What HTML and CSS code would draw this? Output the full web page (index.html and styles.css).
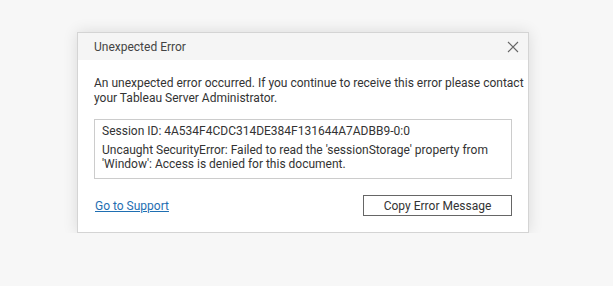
FILE: index.html
```html
<!DOCTYPE html>
<html lang="en">
<head>
    <meta charset="UTF-8">
    <title>Unexpected Error</title>
    <link rel="stylesheet" href="styles.css">
</head>
<body>

<div class="dialog">
    <div class="dialog-header">
        <span class="dialog-title">Unexpected Error</span>
        <button class="close-button" aria-label="Close">
            <svg width="12" height="12" viewBox="0 0 12 12">
                <path d="M1 1 L11 11 M11 1 L1 11" stroke="#666" stroke-width="1.1" fill="none"/>
            </svg>
        </button>
    </div>
    <div class="dialog-body">
        <p class="message">An unexpected error occurred. If you continue to receive this error please contact your Tableau Server Administrator.</p>
        <div class="error-box">
            <p class="session">Session ID: 4A534F4CDC314DE384F131644A7ADBB9-0:0</p>
            <p class="error-text">Uncaught SecurityError: Failed to read the 'sessionStorage' property from 'Window': Access is denied for this document.</p>
        </div>
        <div class="dialog-footer">
            <a class="support-link" href="#">Go to Support</a>
            <button class="copy-button">Copy Error Message</button>
        </div>
    </div>
</div>

</body>
</html>
```

FILE: styles.css
```css
body {
    font-family: Roboto, "Liberation Sans", Arial, sans-serif;
    font-size: 12px;
    color: #333;
    background-color: #f7f7f7;
    margin: 0;
    padding: 32px 0 0 77px;
}
.dialog {
    width: 450px;
    background-color: #fff;
    border: 1px solid #d4d4d4;
    box-shadow: 0 0 14px rgba(0, 0, 0, 0.12);
}
.dialog-header {
    display: flex;
    align-items: center;
    justify-content: space-between;
    height: 27px;
    padding: 0 8px 0 16px;
    background-color: #f5f5f5;
}
.dialog-title {
    color: #444;
}
.close-button {
    border: none;
    background: none;
    padding: 0;
    width: 14px;
    height: 14px;
    display: flex;
    align-items: center;
    justify-content: center;
    cursor: pointer;
}
.dialog-body {
    padding: 16px 16px 16px 16px;
}
.message {
    margin: 0 -12px 13px 0;
    line-height: 15px;
}
.error-box {
    border: 1px solid #ccc;
    padding: 4px 7px 7px 7px;
}
.error-box p {
    margin: 0;
    line-height: 14px;
}
.session {
    margin-bottom: 5px !important;
}
.dialog-footer {
    display: flex;
    align-items: center;
    justify-content: space-between;
    margin-top: 16px;
}
.support-link {
    color: #1f6fb2;
    text-decoration: underline;
    margin-left: 1px;
}
.copy-button {
    font-family: inherit;
    font-size: 12px;
    color: #333;
    background-color: #fff;
    border: 1px solid #666;
    width: 149px;
    height: 21px;
    padding: 0;
}
```
